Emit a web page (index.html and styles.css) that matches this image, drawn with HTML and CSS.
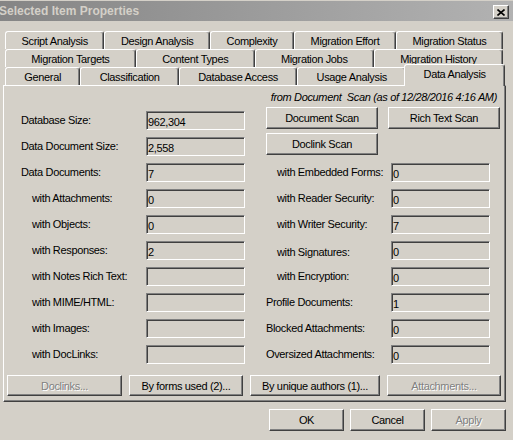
FILE: index.html
```html
<!DOCTYPE html>
<html lang="en">
<head>
  <meta charset="UTF-8" />
  <title>Selected Item Properties</title>
  <link rel="stylesheet" href="styles.css">
</head>
<body>

  <div class="titlebar">
    <span class="title">Selected Item Properties</span>
    <span class="close-btn">
      <svg width="8" height="7" viewBox="0 0 8 7"><path d="M0.5 0.5 L7.5 6.5 M7.5 0.5 L0.5 6.5" stroke="#000" stroke-width="1.6" fill="none"/></svg>
    </span>
  </div>

  <div class="tabs">
    <div class="tab-row">
      <span class="tab">Script Analysis</span>
      <span class="tab">Design Analysis</span>
      <span class="tab">Complexity</span>
      <span class="tab">Migration Effort</span>
      <span class="tab">Migration Status</span>
    </div>
    <div class="tab-row">
      <span class="tab">Migration Targets</span>
      <span class="tab">Content Types</span>
      <span class="tab">Migration Jobs</span>
      <span class="tab">Migration History</span>
    </div>
    <div class="tab-row">
      <span class="tab">General</span>
      <span class="tab">Classification</span>
      <span class="tab">Database Access</span>
      <span class="tab">Usage Analysis</span>
      <span class="tab active">Data Analysis</span>
    </div>
  </div>

  <div class="panel">
    <div class="scan-note">from Document&nbsp; Scan (as of 12/28/2016 4:16 AM)</div>

    <div class="stats">
      <span class="lbl-l">Database Size:</span>
      <span class="fld fld-l">962,304</span>
      <div class="scan-btns">
        <button class="btn scan-btn">Document Scan</button>
        <button class="btn scan-btn">Rich Text Scan</button>
      </div>

      <span class="lbl-l">Data Document Size:</span>
      <span class="fld fld-l">2,558</span>
      <div class="scan-btns">
        <button class="btn scan-btn">Doclink Scan</button>
      </div>

      <span class="lbl-l">Data Documents:</span>
      <span class="fld fld-l">7</span>
      <span class="lbl-r sub">with Embedded Forms:</span>
      <span class="fld fld-r">0</span>

      <span class="lbl-l sub">with Attachments:</span>
      <span class="fld fld-l">0</span>
      <span class="lbl-r sub">with Reader Security:</span>
      <span class="fld fld-r">0</span>

      <span class="lbl-l sub">with Objects:</span>
      <span class="fld fld-l">0</span>
      <span class="lbl-r sub">with Writer Security:</span>
      <span class="fld fld-r">7</span>

      <span class="lbl-l sub">with Responses:</span>
      <span class="fld fld-l">2</span>
      <span class="lbl-r sub low">with Signatures:</span>
      <span class="fld fld-r">0</span>

      <span class="lbl-l sub">with Notes Rich Text:</span>
      <span class="fld fld-l"></span>
      <span class="lbl-r sub">with Encryption:</span>
      <span class="fld fld-r">0</span>

      <span class="lbl-l sub">with MIME/HTML:</span>
      <span class="fld fld-l"></span>
      <span class="lbl-r">Profile Documents:</span>
      <span class="fld fld-r">1</span>

      <span class="lbl-l sub">with Images:</span>
      <span class="fld fld-l"></span>
      <span class="lbl-r">Blocked Attachments:</span>
      <span class="fld fld-r">0</span>

      <span class="lbl-l sub">with DocLinks:</span>
      <span class="fld fld-l"></span>
      <span class="lbl-r">Oversized Attachments:</span>
      <span class="fld fld-r">0</span>
    </div>

    <div class="report-btns">
      <button class="btn disabled w115">Doclinks...</button>
      <button class="btn w114">By forms used (2)...</button>
      <button class="btn w130">By unique authors (1)...</button>
      <button class="btn disabled w114">Attachments...</button>
    </div>
  </div>

  <div class="dialog-btns">
    <button class="btn dlg-btn">OK</button>
    <button class="btn dlg-btn">Cancel</button>
    <button class="btn dlg-btn disabled">Apply</button>
  </div>

</body>
</html>
```

FILE: styles.css
```css
* {
  box-sizing: border-box;
}

/* janela inteira no estilo clássico do Windows */
body {
  margin: 0;
  width: 513px;
  height: 440px;
  overflow: hidden;
  background-color: #d4d0c8;
  color: #000;
  font-family: "Liberation Sans", Arial, sans-serif;
  font-size: 11px;
  letter-spacing: -0.35px;
}

/* Barra de título (janela inativa) */
.titlebar {
  margin-top: 1px;
  height: 20px;
  display: flex;
  align-items: center;
  justify-content: space-between;
  padding-right: 4px;
  background: linear-gradient(90deg, #858585, #b2b2b2);
}

.title {
  margin-left: -1px;
  font-size: 12px;
  font-weight: bold;
  letter-spacing: 0;
  color: #d4d0c8;
}

.close-btn {
  width: 16px;
  height: 14px;
  margin-top: 2px;
  display: flex;
  align-items: center;
  justify-content: center;
  background-color: #d4d0c8;
  border: 1px solid;
  border-color: #fff #404040 #404040 #fff;
  box-shadow: inset -1px -1px #808080;
}

/* Abas em várias linhas */
.tabs {
  margin: 10px 0 0 5px;
  width: 498px;
}

.tab-row {
  display: flex;
  height: 18px;
}

.tab {
  flex: 1 1 auto;
  text-align: center;
  white-space: nowrap;
  line-height: 16px;
  padding-top: 1px;
  border: 1px solid;
  border-bottom: 0;
  border-color: #fff #404040 transparent #fff;
  border-radius: 3px 3px 0 0;
  box-shadow: inset -1px 0 #808080;
  background-color: #d4d0c8;
}

.tab.active {
  margin: -3px -2px 0 -2px;
  height: 22px;
  position: relative;
  z-index: 1;
}

/* Painel da aba selecionada */
.panel {
  margin-left: 3px;
  width: 503px;
  padding: 4px 0 5px 0;
  border: 1px solid;
  border-color: #fff #404040 #404040 #fff;
  box-shadow: inset -1px -1px #808080;
}

.scan-note {
  height: 14px;
  line-height: 14px;
  padding-right: 8px;
  text-align: right;
  font-style: italic;
}

.stats {
  margin-top: 3px;
  padding-left: 17px;
  display: grid;
  grid-template-columns: 125px 99px 21px 125px 99px 10px;
  grid-auto-rows: 26px;
  align-items: center;
}

.lbl-l { grid-column: 1; }
.fld-l { grid-column: 2; }
.lbl-r { grid-column: 4; }
.fld-r { grid-column: 5; }

.sub {
  padding-left: 11px;
}

.low {
  padding-top: 3px;
}

.fld {
  height: 19px;
  padding-top: 2px;
  line-height: 16px;
  border: 1px solid;
  border-color: #808080 #fff #fff #808080;
  box-shadow: inset 1px 1px #404040;
  padding-left: 1px;
}

.scan-btns {
  grid-column: 4 / 7;
  align-self: start;
  display: flex;
  gap: 10px;
}

/* Botões */
.btn {
  font-family: inherit;
  font-size: 11px;
  letter-spacing: -0.35px;
  color: #000;
  padding: 0;
  background-color: #d4d0c8;
  border: 1px solid;
  border-color: #fff #404040 #404040 #fff;
  box-shadow: inset -1px -1px #808080;
}

.btn.disabled {
  color: #808080;
  text-shadow: 1px 1px #fff;
}

.scan-btn {
  width: 112px;
  height: 22px;
}

.report-btns {
  margin-top: 8px;
  padding-left: 3px;
  display: flex;
  gap: 7px;
}

.report-btns .btn {
  height: 21px;
}

.w115 { width: 115px; }
.w114 { width: 114px; }
.w130 { width: 130px; }

.dialog-btns {
  margin-top: 7px;
  padding-right: 7px;
  display: flex;
  justify-content: flex-end;
  gap: 6px;
}

.dlg-btn {
  width: 75px;
  height: 22px;
}
```
